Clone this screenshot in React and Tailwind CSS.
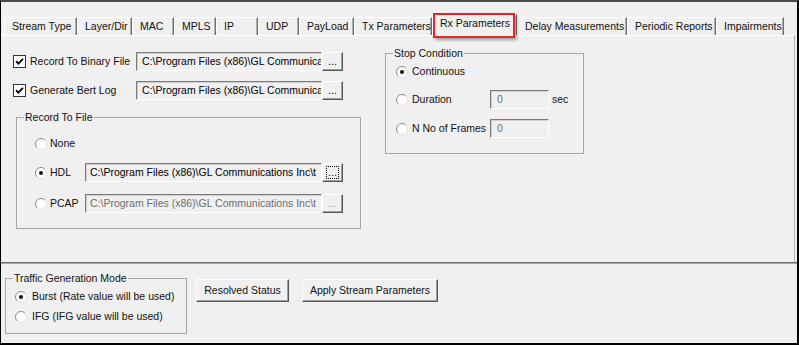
import React from 'react';

const tabs = [
  { label: 'Stream Type', w: 'w-[73px]' },
  { label: 'Layer/Dir', w: 'w-[55px]' },
  { label: 'MAC', w: 'w-[42px]' },
  { label: 'MPLS', w: 'w-[42px]' },
  { label: 'IP', w: 'w-[42px]' },
  { label: 'UDP', w: 'w-[41px]' },
  { label: 'PayLoad', w: 'w-[55px]' },
  { label: 'Tx Parameters', w: 'w-[78px]' },
  { label: 'Rx Parameters', w: 'w-[85px]', active: true },
  { label: 'Delay Measurements', w: 'w-[110px]' },
  { label: 'Periodic Reports', w: 'w-[89px]' },
  { label: 'Impairments', w: 'w-[68px]' },
];

function Radio({ checked }) {
  return (
    <svg width="12" height="12" viewBox="0 0 12 12" className="shrink-0">
      <circle cx="6" cy="6" r="5.5" fill="#fff" />
      <path d="M2.1 9.9 A5.5 5.5 0 0 1 9.9 2.1" stroke="#8a8a8a" fill="none" />
      <path d="M9.9 2.1 A5.5 5.5 0 0 1 2.1 9.9" stroke="#e2e2e2" fill="none" />
      {checked && <circle cx="6" cy="6" r="2" fill="#111" />}
    </svg>
  );
}

function Checkbox() {
  return (
    <span className="flex w-[13px] h-[13px] shrink-0 items-center justify-center bg-white border border-[#333]">
      <svg width="9" height="9" viewBox="0 0 9 9">
        <path d="M1 4.2 L3.4 6.6 L8 1.8" stroke="#000" strokeWidth="1.8" fill="none" />
      </svg>
    </span>
  );
}

function Field({ text, w, disabled, pad = 'pl-[5px]' }) {
  return (
    <div
      className={`${w} h-[19px] flex items-center overflow-hidden whitespace-nowrap ${pad} bg-[#f0f0f0] border border-t-[#7a7a7a] border-l-[#7a7a7a] border-b-white border-r-white shadow-[inset_1px_1px_0_#cfcfcf] ${
        disabled ? 'text-[#6d6d6d]' : 'text-black'
      }`}
    >
      {text}
    </div>
  );
}

function DotsButton({ focused, disabled }) {
  return (
    <div className="w-[21px] h-[19px] flex items-center justify-center bg-[#f0f0f0] border border-t-white border-l-white border-b-[#555] border-r-[#555] shadow-[inset_-1px_-1px_0_#a0a0a0]">
      <span
        className={`px-[1px] leading-[11px] ${focused ? 'border border-dotted border-black' : ''} ${
          disabled ? 'text-[#a0a0a0]' : 'text-black'
        }`}
      >
        ...
      </span>
    </div>
  );
}

function Button({ children, w }) {
  return (
    <button className={`${w} h-[23px] flex items-center justify-center bg-[#f0f0f0] border border-t-white border-l-white border-b-[#555] border-r-[#555] shadow-[inset_-1px_-1px_0_#a0a0a0]`}>
      {children}
    </button>
  );
}

function Group({ label, className, children }) {
  return (
    <div className={`relative border border-[#a6a6a6] ${className}`}>
      <span className="absolute -top-[7px] left-[7px] bg-[#f0f0f0] px-[1px] leading-[13px]">{label}</span>
      {children}
    </div>
  );
}

export default function App() {
  return (
    <div
      className="w-[799px] h-[345px] flex flex-col bg-[#f0f0f0] text-[10.5px] text-[#111] border-t-2 border-t-[#4a4a4a] border-l border-l-black border-r-2 border-r-black border-b-2 border-b-black overflow-hidden"
      style={{ fontFamily: '"Liberation Sans", Arial, sans-serif' }}
    >
      {/* Tab strip */}
      <div className="flex items-end h-[33px] pl-[3px]">
        {tabs.map(t =>
          t.active ? (
            <div
              key={t.label}
              className={`relative ${t.w} h-[21px] flex items-center pl-[7px] pb-[2px] border-t border-l border-white border-r border-r-[#707070]`}
            >
              {t.label}
              <span className="absolute left-0 right-[1px] -top-[2px] -bottom-[3px] border-2 border-[#e3242b] shadow-[2px_2px_3px_rgba(0,0,0,0.35)]" />
            </div>
          ) : (
            <div
              key={t.label}
              className={`${t.w} h-[18px] flex items-center pl-[7px] border-t border-l border-white border-r border-r-[#707070] shadow-[inset_-1px_0_0_#b0b0b0]`}
            >
              {t.label}
            </div>
          )
        )}
      </div>

      {/* Rx Parameters panel */}
      <div className="h-[227px] flex pt-[16px] pl-[12px] mr-[2px] border-t border-white border-r border-r-[#b0b0b0]">
        <div className="w-[348px] flex flex-col">
          <div className="h-[19px] flex items-center">
            <Checkbox />
            <span className="w-[110px] pl-[4px] whitespace-nowrap">Record To Binary File</span>
            <Field text="C:\Program Files (x86)\GL Communica" w="w-[186px]" />
            <DotsButton />
          </div>
          <div className="h-[19px] mt-[10px] flex items-center">
            <Checkbox />
            <span className="w-[110px] pl-[4px] whitespace-nowrap">Generate Bert Log</span>
            <Field text="C:\Program Files (x86)\GL Communica" w="w-[186px]" />
            <DotsButton />
          </div>

          <Group label="Record To File" className="ml-[3px] mt-[17px] w-[345px] h-[112px] pl-[18px] pt-[16px]">
            <div className="h-[19px] flex items-center gap-[3px]">
              <Radio />
              <span>None</span>
            </div>
            <div className="h-[19px] mt-[10px] flex items-center">
              <Radio checked />
              <span className="w-[38px] pl-[3px]">HDL</span>
              <Field text="C:\Program Files (x86)\GL Communications Inc\t" w="w-[237px]" pad="pl-[4px]" />
              <DotsButton focused />
            </div>
            <div className="h-[19px] mt-[12px] flex items-center">
              <Radio />
              <span className="w-[38px] pl-[3px]">PCAP</span>
              <Field text="C:\Program Files (x86)\GL Communications Inc\t" w="w-[237px]" pad="pl-[4px]" disabled />
              <DotsButton disabled />
            </div>
          </Group>
        </div>

        <Group label="Stop Condition" className="ml-[24px] mt-[1px] w-[199px] h-[101px] pl-[10px] pt-[8px]">
          <div className="h-[19px] flex items-center gap-[4px]">
            <Radio checked />
            <span>Continuous</span>
          </div>
          <div className="h-[19px] mt-[9px] flex items-center">
            <Radio />
            <span className="w-[82px] pl-[4px]">Duration</span>
            <Field text="0" w="w-[59px]" disabled pad="pl-[6px]" />
            <span className="pl-[3px]">sec</span>
          </div>
          <div className="h-[19px] mt-[10px] flex items-center">
            <Radio />
            <span className="w-[82px] pl-[4px] whitespace-nowrap">N No of Frames</span>
            <Field text="0" w="w-[59px]" disabled pad="pl-[6px]" />
          </div>
        </Group>
      </div>

      {/* Separator */}
      <div className="h-[2px] border-t border-[#6d6d6d] bg-[#a8a8a8]" />

      {/* Bottom section */}
      <div className="flex items-start pt-[14px] pl-[4px]">
        <Group label="Traffic Generation Mode" className="w-[182px] h-[56px] pl-[9px] pt-[10px]">
          <div className="h-[16px] flex items-center gap-[5px]">
            <Radio checked />
            <span>Burst (Rate value will be used)</span>
          </div>
          <div className="h-[16px] mt-[4px] flex items-center gap-[5px]">
            <Radio />
            <span>IFG (IFG value will be used)</span>
          </div>
        </Group>
        <div className="flex gap-[13px] ml-[9px] mt-[1px]">
          <Button w="w-[93px]">Resolved Status</Button>
          <Button w="w-[136px]">Apply Stream Parameters</Button>
        </div>
      </div>
    </div>
  );
}
